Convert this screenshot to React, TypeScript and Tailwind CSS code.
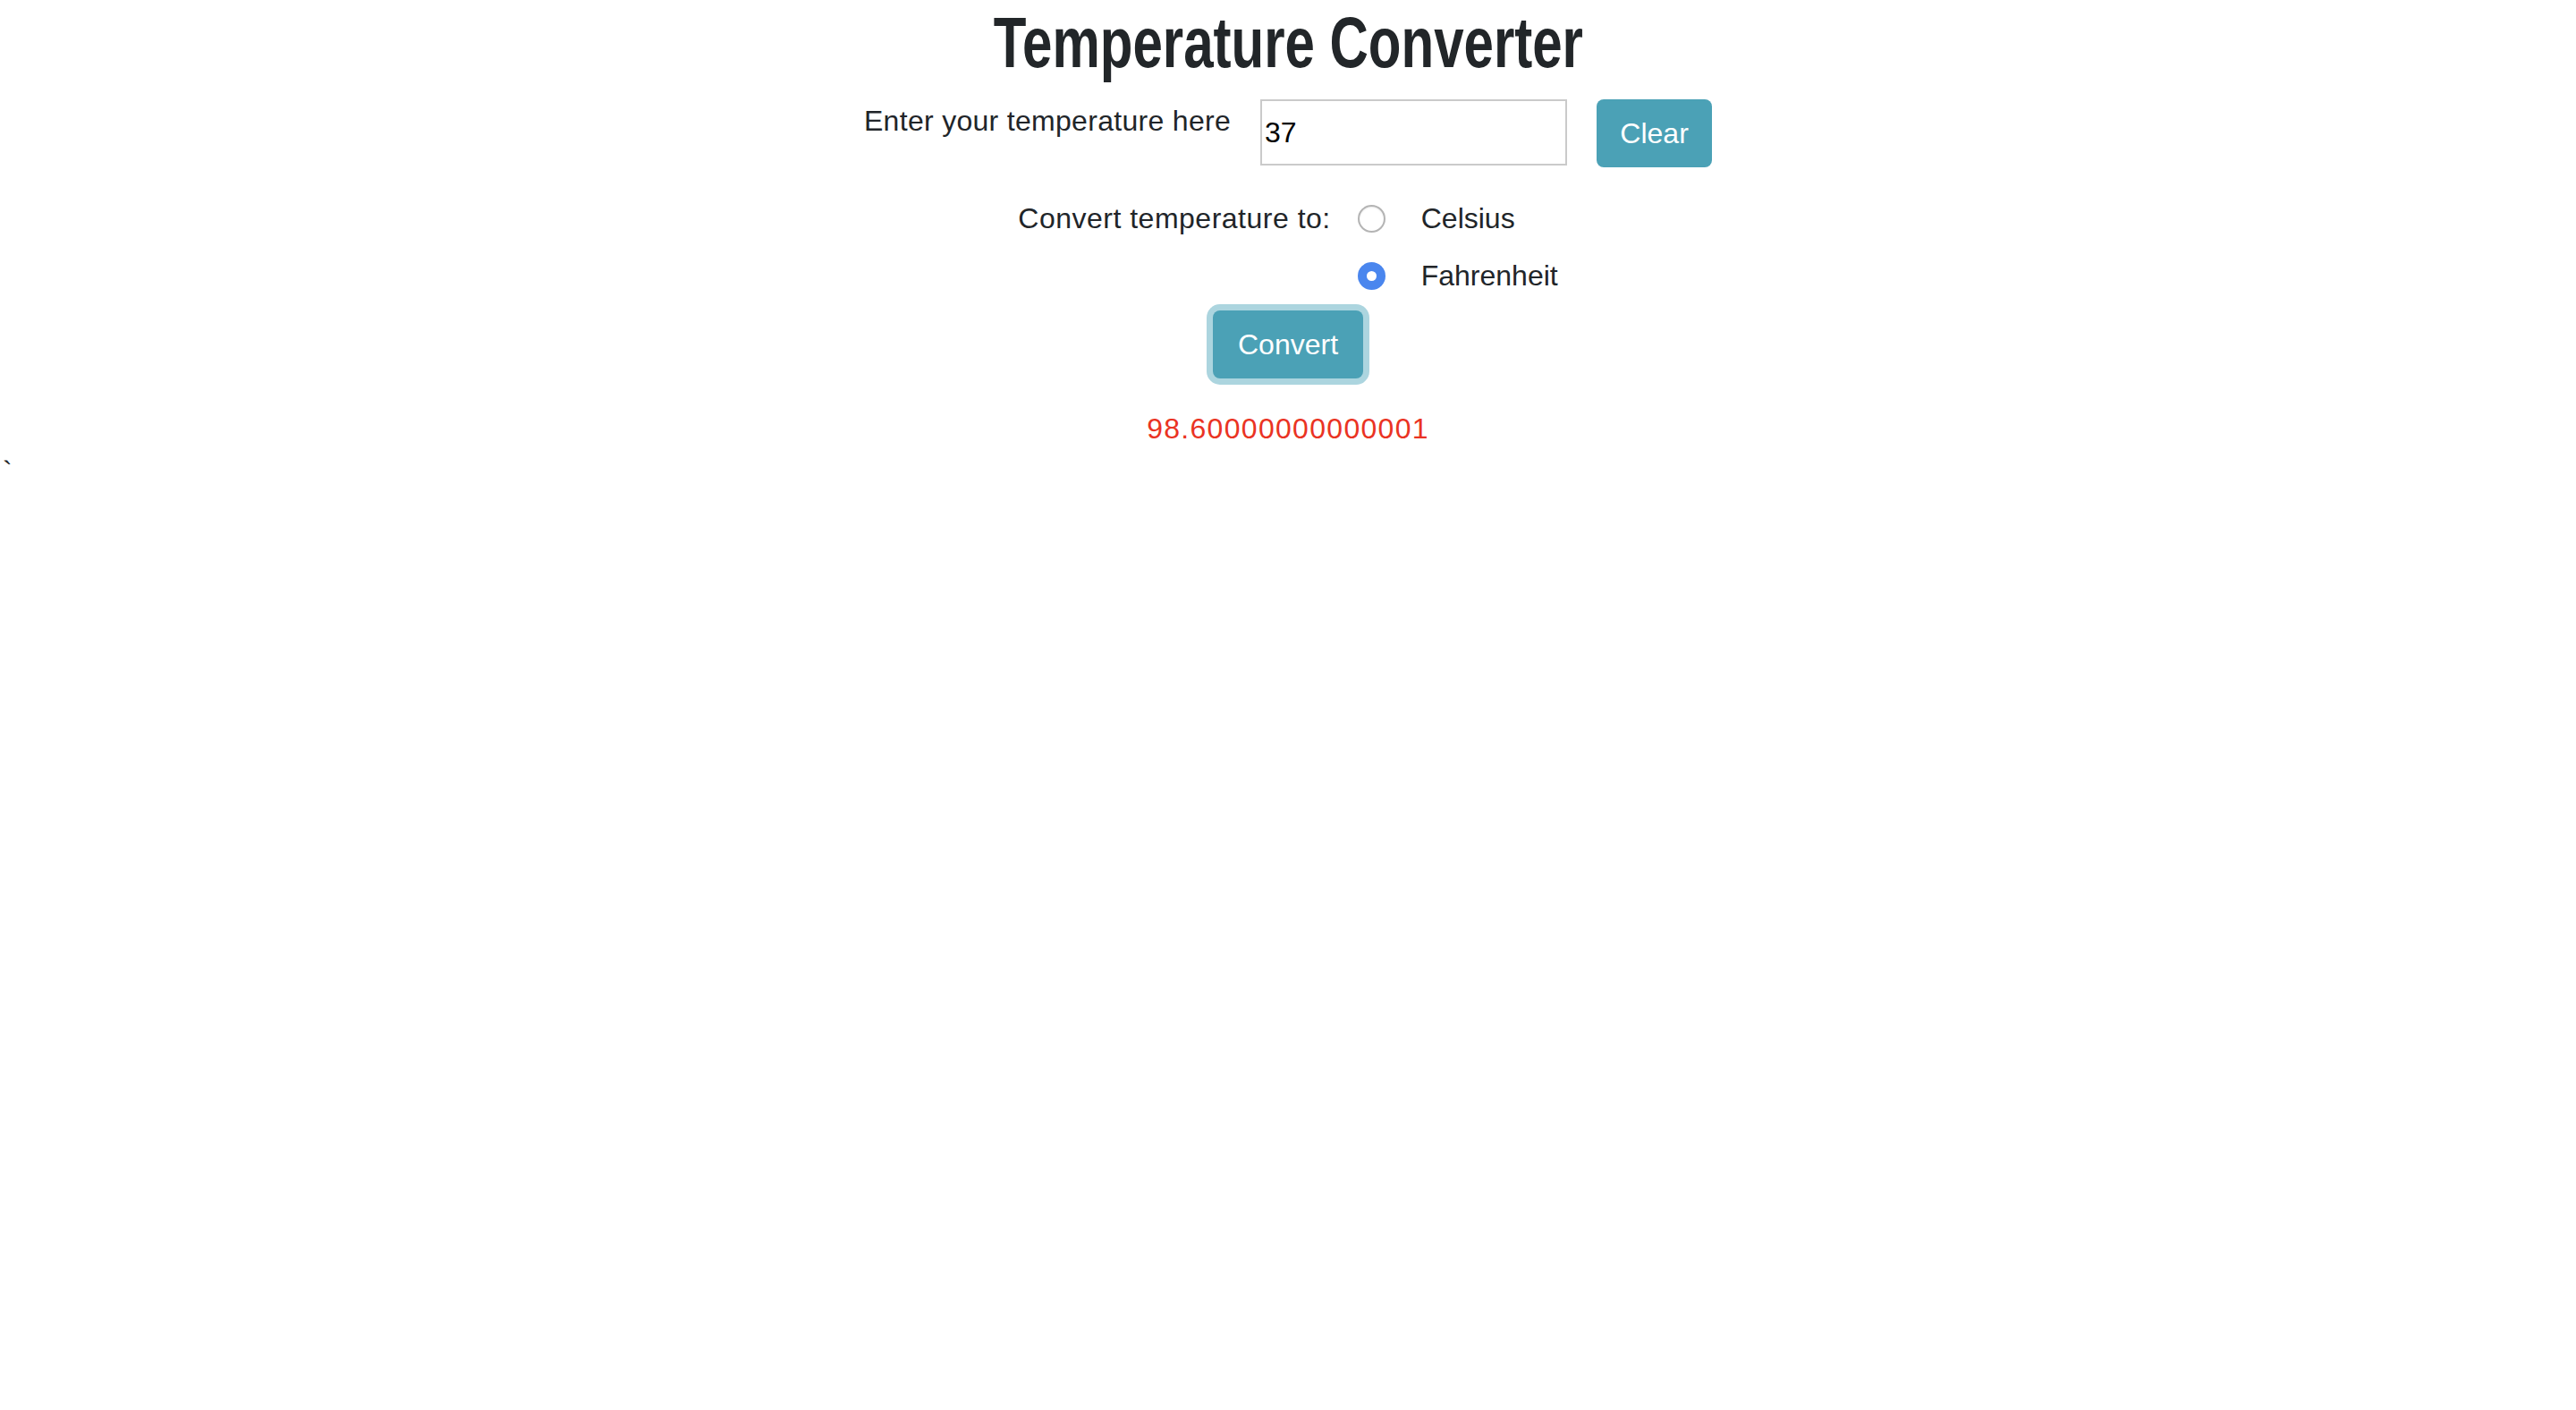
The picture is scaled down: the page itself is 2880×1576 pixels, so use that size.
import { useState } from 'react'

type Unit = 'celsius' | 'fahrenheit'

function Radio({ checked }: { checked: boolean }) {
  if (checked) {
    return (
      <span className="flex h-[31px] w-[31px] shrink-0 items-center justify-center rounded-full bg-[#4a86ee]">
        <span className="h-[11px] w-[11px] rounded-full bg-white" />
      </span>
    )
  }
  return (
    <span className="h-[31px] w-[31px] shrink-0 rounded-full border-2 border-[#b4b4b4] bg-white shadow-[inset_0_1px_2px_rgba(0,0,0,0.08)]" />
  )
}

export default function App() {
  const [value, setValue] = useState('37')
  const [unit, setUnit] = useState<Unit>('fahrenheit')
  const result = '98.60000000000001'

  const options: { key: Unit; label: string }[] = [
    { key: 'celsius', label: 'Celsius' },
    { key: 'fahrenheit', label: 'Fahrenheit' },
  ]

  return (
    <div className="min-h-screen bg-white font-['Liberation_Sans',Arial,sans-serif] text-[32px] leading-[48px] text-[#212529]">
      <div className="flex flex-col items-center">
        <h1 className="mb-[15px] text-[80px] font-bold leading-[96px] text-[#222629]">
          <span className="inline-block scale-x-[0.75]">Temperature Converter</span>
        </h1>

        {/* Input row */}
        <div className="flex items-start gap-[33px]">
          <label className="tracking-[0.3px]">Enter your temperature here</label>
          <input
            value={value}
            onChange={(e) => setValue(e.target.value)}
            className="h-[74px] w-[343px] border-2 border-[#cacaca] px-[3px] text-[32px] text-black outline-none"
          />
          <button
            onClick={() => setValue('')}
            className="h-[76px] w-[129px] rounded-[8px] bg-[#4ba1b6] text-white"
          >
            Clear
          </button>
        </div>

        {/* Unit row */}
        <div className="mt-[33px] flex items-start gap-[30px]">
          <span className="tracking-[0.5px]">Convert temperature to:</span>
          <div className="flex flex-col gap-4">
            {options.map((o) => (
              <label
                key={o.key}
                onClick={() => setUnit(o.key)}
                className="flex h-[48px] cursor-pointer items-center gap-[40px]"
              >
                <Radio checked={unit === o.key} />
                <span>{o.label}</span>
              </label>
            ))}
          </div>
        </div>

        <button className="mt-[15px] h-[76px] w-[168px] rounded-[8px] bg-[#4ba1b6] text-white ring-[7px] ring-[#acd5df]">
          Convert
        </button>

        <p className="mt-8 tracking-[1.3px] text-[#ea3323]">{result}</p>
      </div>
      <div className="pl-[3px]">`</div>
    </div>
  )
}
